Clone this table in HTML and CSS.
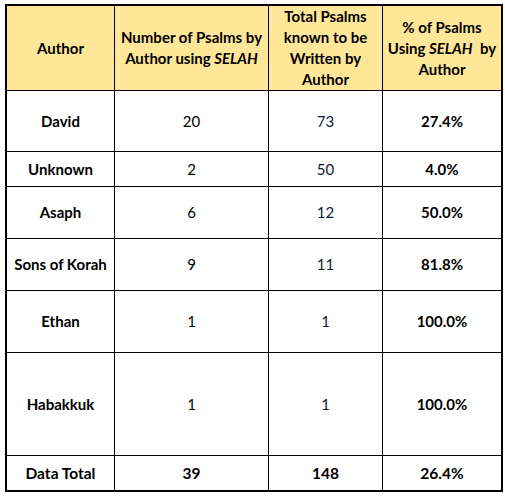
FILE: index.html
```html
<!DOCTYPE html>
<html lang="en">
<head>
    <meta charset="UTF-8">
    <meta name="viewport" content="width=device-width, initial-scale=1.0">
    <title>Psalms using Selah</title>
    <link rel="stylesheet" href="styles.css">
</head>
<body>
    <table class="selah-table">
        <colgroup>
            <col class="col-author">
            <col class="col-count">
            <col class="col-total">
            <col class="col-pct">
        </colgroup>
        <thead>
            <tr class="row-head">
                <th>Author</th>
                <th>Number of Psalms by<br>Author using <em>SELAH</em></th>
                <th>Total Psalms<br>known to be<br>Written by<br>Author</th>
                <th>% of Psalms<br>Using <em>SELAH</em>&nbsp; by<br>Author</th>
            </tr>
        </thead>
        <tbody>
            <tr class="row-60">
                <td class="name">David</td>
                <td>20</td>
                <td class="known">73</td>
                <td class="pct">27.4%</td>
            </tr>
            <tr class="row-34">
                <td class="name">Unknown</td>
                <td>2</td>
                <td class="known">50</td>
                <td class="pct">4.0%</td>
            </tr>
            <tr class="row-51">
                <td class="name">Asaph</td>
                <td>6</td>
                <td class="known">12</td>
                <td class="pct">50.0%</td>
            </tr>
            <tr class="row-51">
                <td class="name">Sons of Korah</td>
                <td>9</td>
                <td class="known">11</td>
                <td class="pct">81.8%</td>
            </tr>
            <tr class="row-61">
                <td class="name">Ethan</td>
                <td>1</td>
                <td class="known">1</td>
                <td class="pct">100.0%</td>
            </tr>
            <tr class="row-102">
                <td class="name">Habakkuk</td>
                <td>1</td>
                <td class="known">1</td>
                <td class="pct">100.0%</td>
            </tr>
        </tbody>
        <tfoot>
            <tr class="row-34 total">
                <td>Data Total</td>
                <td>39</td>
                <td>148</td>
                <td>26.4%</td>
            </tr>
        </tfoot>
    </table>
</body>
</html>
```

FILE: styles.css
```css
* {
    margin: 0;
    padding: 0;
    box-sizing: border-box;
}

body {
    background-color: #fff;
    color: #000;
    font-family: Lato, "Open Sans", sans-serif;
    font-size: 15px;
    padding: 4px 0 0 5px;
}

.selah-table {
    width: 498px;
    table-layout: fixed;
    border: 1px solid #000;
    border-spacing: 1px;
    background-color: #000;
}

.col-author { width: 107px; }
.col-count  { width: 153px; }
.col-total  { width: 113px; }
.col-pct    { width: 118px; }

th, td {
    background-color: #fff;
    text-align: center;
    vertical-align: middle;
    padding: 0;
    line-height: 21px;
}

th {
    background-color: #ffe699;
    font-weight: 700;
}

th em {
    font-style: italic;
}

.row-head { height: 84px; }
.row-60   { height: 60px; }
.row-34   { height: 34px; }
.row-51   { height: 51px; }
.row-61   { height: 61px; }
.row-102  { height: 102px; }

.name,
.pct {
    font-weight: 700;
}

.known {
    color: #141833;
}

.total td {
    font-weight: 700;
    font-size: 15.5px;
}
```
